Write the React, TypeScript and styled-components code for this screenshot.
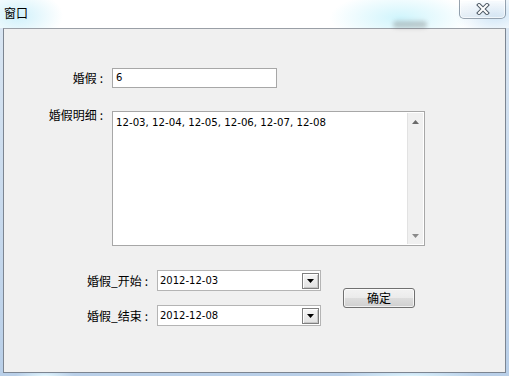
import * as React from 'react';
import styled, { createGlobalStyle } from 'styled-components';

const cjk = `"Noto Sans CJK SC", "Noto Sans", sans-serif`;
const latin = `"DejaVu Sans", "Noto Sans CJK SC", sans-serif`;

const GlobalStyle = createGlobalStyle`
  html, body {
    margin: 0;
    padding: 0;
  }
  body {
    width: 509px;
    height: 376px;
    overflow: hidden;
    background: #c3d6ec;
  }
`;

const Frame = styled.div`
  width: 509px;
  height: 376px;
  display: flex;
  flex-direction: column;
  background:
    radial-gradient(ellipse 30px 6px at 45px 376px, rgba(230, 250, 255, 0.95), transparent),
    radial-gradient(ellipse 70px 6px at 410px 376px, rgba(225, 248, 255, 0.9), transparent),
    linear-gradient(#dbe7f3, #b9cfe8);
`;

const TitleBar = styled.div`
  position: relative;
  height: 28px;
  display: flex;
  align-items: flex-start;
  background:
    radial-gradient(ellipse 45px 26px at 18px 16px, rgba(205, 240, 250, 0.95), transparent),
    radial-gradient(ellipse 70px 26px at 400px 18px, rgba(205, 244, 252, 0.95), transparent),
    radial-gradient(ellipse 40px 24px at 495px 14px, rgba(200, 225, 245, 0.9), transparent),
    #ffffff;
`;

const Title = styled.div`
  flex: 1;
  padding: 5px 0 0 4px;
  font: 12px/16px ${cjk};
  color: #000;
`;

const Smudge = styled.span`
  position: absolute;
  left: 393px;
  top: 21px;
  width: 34px;
  height: 7px;
  border-radius: 4px;
  background: rgba(80, 80, 80, 0.28);
  filter: blur(2px);
`;

const CloseButton = styled.div`
  width: 45px;
  height: 18px;
  margin-right: 3px;
  display: flex;
  align-items: center;
  justify-content: center;
  border: 1px solid rgba(70, 90, 110, 0.55);
  border-top: none;
  border-radius: 0 0 5px 5px;
  background: linear-gradient(rgba(255, 255, 255, 0.7), rgba(215, 228, 240, 0.6));
  box-shadow: inset 0 0 0 1px rgba(255, 255, 255, 0.6);
`;

const Client = styled.div`
  flex: 1;
  margin: 0 3px 3px 3px;
  border: 1px solid #7c8591;
  border-top-color: #9a9fa6;
  background: #f0f0f0;
  padding: 39px 0 0 0;
  display: flex;
  flex-direction: column;
`;

const FieldRow = styled.div<{ $top?: boolean; $gap?: number }>`
  display: flex;
  align-items: ${(p) => (p.$top ? 'flex-start' : 'center')};
  margin-top: ${(p) => p.$gap ?? 0}px;
`;

const Label = styled.div<{ $w: number; $shift?: number }>`
  width: ${(p) => p.$w}px;
  margin-right: 9px;
  margin-top: ${(p) => p.$shift ?? 0}px;
  flex-shrink: 0;
  text-align: right;
  font: 12px/16px ${cjk};
  color: #000;
  white-space: nowrap;
`;

const Colon = styled.span`
  margin-left: 3px;
`;

const TextBox = styled.div`
  width: 165px;
  height: 20px;
  box-sizing: border-box;
  border: 1px solid #a7a7a7;
  background: #fff;
  padding: 0 3px;
  display: flex;
  align-items: center;
  font: 10px/12px ${latin};
  color: #000;
`;

const MemoBox = styled.div`
  width: 313px;
  height: 135px;
  box-sizing: border-box;
  border: 1px solid #a7a7a7;
  background: #fff;
  padding: 1px;
  display: flex;
`;

const MemoText = styled.div`
  flex: 1;
  padding: 3px 2px 0 2px;
  font: 10.2px/13px ${latin};
  color: #000;
  white-space: nowrap;
  overflow: hidden;
`;

const ScrollBar = styled.div`
  width: 16px;
  box-sizing: border-box;
  border-left: 1px solid #e2e2e2;
  background: #f0f0f0;
  display: flex;
  flex-direction: column;
  justify-content: space-between;
  align-items: center;
  padding: 7px 0 6px 0;
`;

const Lower = styled.div`
  display: flex;
  align-items: center;
  margin-top: 24px;
`;

const ComboColumn = styled.div`
  display: flex;
  flex-direction: column;
  gap: 14px;
`;

const Combo = styled.div`
  width: 164px;
  height: 21px;
  box-sizing: border-box;
  border: 1px solid #b4b4b4;
  background: #fff;
  display: flex;
  align-items: center;
`;

const ComboText = styled.div`
  flex: 1;
  padding-left: 2px;
  font: 10px/12px ${latin};
  color: #000;
`;

const DropButton = styled.div`
  width: 17px;
  height: 16px;
  margin-right: 1px;
  box-sizing: border-box;
  border: 1px solid #7f7f7f;
  background: linear-gradient(#f6f6f6, #e2e2e2);
  box-shadow: inset 1px 1px 0 #ffffff, inset -1px -1px 0 #c8c8c8;
  display: flex;
  align-items: center;
  justify-content: center;
`;

const PushButton = styled.div`
  width: 72px;
  height: 20px;
  margin-left: 22px;
  box-sizing: border-box;
  border: 1px solid #707070;
  border-radius: 3px;
  background: linear-gradient(#f2f2f2 0%, #ebebeb 48%, #dddddd 52%, #cfcfcf 100%);
  box-shadow: inset 0 0 0 1px rgba(255, 255, 255, 0.7);
  display: flex;
  align-items: center;
  justify-content: center;
  font: 12px/16px ${cjk};
  color: #000;
`;

const Arrow = ({ down, color }: { down?: boolean; color: string }): React.ReactElement => (
  <svg width="7" height="4" viewBox="0 0 7 4">
    <polygon points={down ? '0,0 7,0 3.5,4' : '0,4 7,4 3.5,0'} fill={color} />
  </svg>
);

const CloseGlyph = (): React.ReactElement => (
  <svg width="14" height="12" viewBox="0 0 14 12">
    <path d="M3 2 L11 10 M11 2 L3 10" stroke="#4e5a66" strokeWidth="4" strokeLinecap="square" />
    <path d="M3 2 L11 10 M11 2 L3 10" stroke="#ffffff" strokeWidth="2" strokeLinecap="square" />
  </svg>
);

const App = (): React.ReactElement => {
  const dates = ['12-03', '12-04', '12-05', '12-06', '12-07', '12-08'];

  return (
    <>
      <GlobalStyle />
      <Frame>
        <TitleBar>
          <Title>窗口</Title>
          <Smudge />
          <CloseButton>
            <CloseGlyph />
          </CloseButton>
        </TitleBar>
        <Client>
          <FieldRow>
            <Label $w={99}>
              婚假<Colon>:</Colon>
            </Label>
            <TextBox>6</TextBox>
          </FieldRow>
          <FieldRow $top $gap={23}>
            <Label $w={99} $shift={-4}>
              婚假明细<Colon>:</Colon>
            </Label>
            <MemoBox>
              <MemoText>{dates.join(', ')}</MemoText>
              <ScrollBar>
                <Arrow color="#6a6a6a" />
                <Arrow down color="#8a8a8a" />
              </ScrollBar>
            </MemoBox>
          </FieldRow>
          <Lower>
            <ComboColumn>
              <FieldRow>
                <Label $w={144}>
                  婚假_开始<Colon>:</Colon>
                </Label>
                <Combo>
                  <ComboText>2012-12-03</ComboText>
                  <DropButton>
                    <Arrow down color="#000" />
                  </DropButton>
                </Combo>
              </FieldRow>
              <FieldRow>
                <Label $w={144}>
                  婚假_结束<Colon>:</Colon>
                </Label>
                <Combo>
                  <ComboText>2012-12-08</ComboText>
                  <DropButton>
                    <Arrow down color="#000" />
                  </DropButton>
                </Combo>
              </FieldRow>
            </ComboColumn>
            <PushButton>确定</PushButton>
          </Lower>
        </Client>
      </Frame>
    </>
  );
};

export default App;
